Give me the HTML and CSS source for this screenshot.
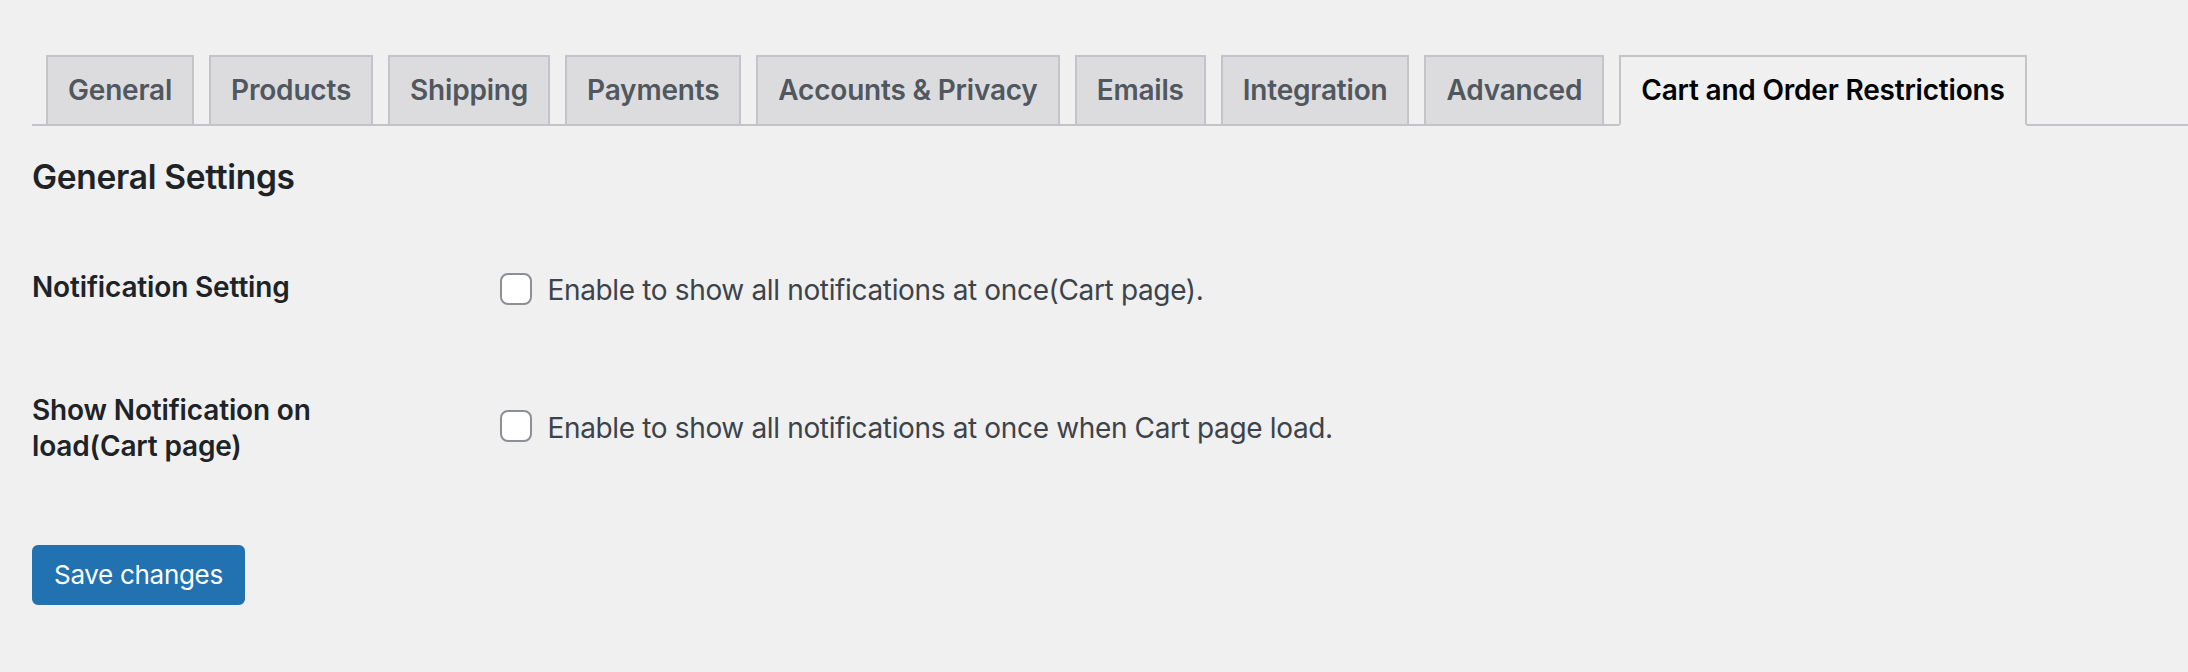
FILE: index.html
```html
<!DOCTYPE html>
<html lang="en">
<head>
<meta charset="utf-8">
<title>Cart and Order Restrictions</title>
<link rel="stylesheet" href="styles.css">
</head>
<body>
<div class="wrap">
  <nav class="nav-tab-wrapper">
    <a class="nav-tab">General</a>
    <a class="nav-tab">Products</a>
    <a class="nav-tab">Shipping</a>
    <a class="nav-tab">Payments</a>
    <a class="nav-tab">Accounts &amp; Privacy</a>
    <a class="nav-tab">Emails</a>
    <a class="nav-tab">Integration</a>
    <a class="nav-tab">Advanced</a>
    <a class="nav-tab nav-tab-active">Cart and Order Restrictions</a>
  </nav>
  <h2 class="section-title">General Settings</h2>
  <table class="form-table">
    <tbody>
      <tr class="row-first">
        <th scope="row">Notification Setting</th>
        <td><label class="check-label"><input type="checkbox" class="check"> Enable to show all notifications at once(Cart page).</label></td>
      </tr>
      <tr>
        <th scope="row">Show Notification on load(Cart page)</th>
        <td><label class="check-label"><input type="checkbox" class="check"> Enable to show all notifications at once when Cart page load.</label></td>
      </tr>
    </tbody>
  </table>
  <p class="submit"><button type="button" class="button-primary">Save changes</button></p>
</div>
</body>
</html>
```
FILE: styles.css
```css
html, body {
  margin: 0;
  padding: 0;
  background: #f0f0f1;
}
body {
  font-family: Inter, "Noto Sans", "Liberation Sans", sans-serif;
  font-size: 28px;
  color: #3c434a;
}
.wrap {
  padding: 55px 0 0 32px;
}
.nav-tab-wrapper {
  display: flex;
  align-items: flex-end;
  border-bottom: 2px solid #c3c4c7;
}
.nav-tab {
  display: block;
  margin: 0 0 -2px 15px;
  padding: 10px 20px;
  border: 2px solid #c3c4c7;
  background: #dcdcde;
  color: #50575e;
  font-size: 28px;
  font-weight: 600;
  line-height: 47px;
  letter-spacing: -0.2px;
  white-space: nowrap;
  text-decoration: none;
}
.nav-tab:first-child {
  margin-left: 14px;
}
.nav-tab-active {
  background: #f0f0f1;
  color: #000;
  border-bottom-color: #f0f0f1;
}
.section-title {
  margin: 29.5px 0 0;
  font-size: 33.5px;
  line-height: 43.5px;
  font-weight: 600;
  letter-spacing: -0.3px;
  color: #1d2327;
}
.form-table {
  margin-top: 30px;
  border-collapse: collapse;
  border-spacing: 0;
}
.form-table th {
  width: 400px;
  padding: 40px 48px 40px 0;
  text-align: left;
  vertical-align: top;
  font-weight: 600;
  line-height: 36.4px;
  letter-spacing: -0.15px;
  color: #1d2327;
}
.form-table tr.row-first th {
  padding-bottom: 46.5px;
}
.form-table td {
  padding: 30px 20px;
  vertical-align: middle;
  line-height: 36.4px;
  letter-spacing: -0.35px;
}
.check-label {
  color: #3c434a;
}
.check {
  appearance: none;
  -webkit-appearance: none;
  box-sizing: border-box;
  width: 32px;
  height: 32px;
  margin: -8px 8px 0 0;
  padding: 0;
  border: 2px solid #8c8f94;
  border-radius: 8px;
  background: #fff;
  vertical-align: middle;
}
.submit {
  margin: 40px 0 0;
  padding: 0;
}
.button-primary {
  box-sizing: border-box;
  height: 60px;
  padding: 0 20px;
  border: 2px solid #2271b1;
  border-radius: 6px;
  background: #2271b1;
  color: #fff;
  font-family: Inter, "Noto Sans", "Liberation Sans", sans-serif;
  font-size: 26px;
  line-height: 56px;
  letter-spacing: -0.3px;
  cursor: pointer;
}
```
